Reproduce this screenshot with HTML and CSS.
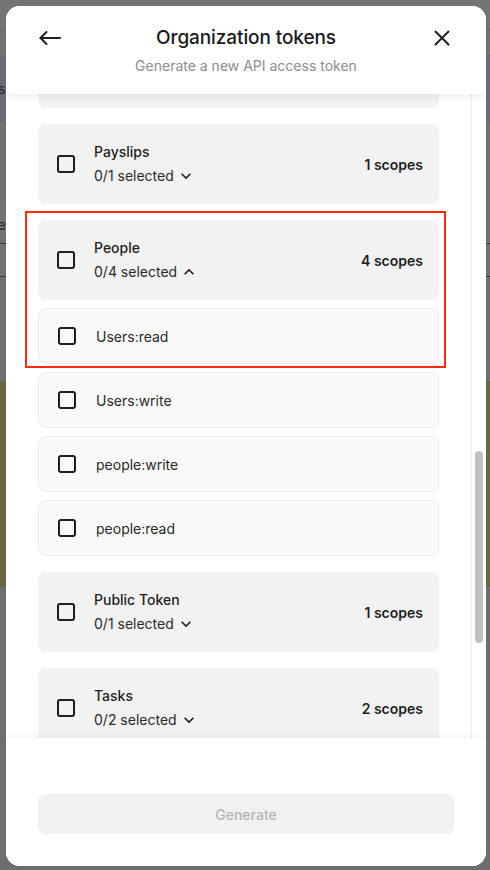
FILE: index.html
```html
<!DOCTYPE html>
<html lang="en">
<head>
<meta charset="utf-8">
<title>Organization tokens</title>
<link rel="stylesheet" href="styles.css">
</head>
<body>
<div class="backdrop">
  <div class="bg-top"></div>
  <div class="bg-line"></div>
  <div class="bg-bar"></div>
  <div class="bg-purple"><span class="bg-text">rs</span></div>
  <div class="bg-grey"></div>
  <div class="bg-row"><span class="bg-text">te</span></div>
  <div class="bg-rule"></div>
  <div class="bg-row2"></div>
  <div class="bg-rule"></div>
  <div class="bg-grey2"></div>
  <div class="bg-olive"></div>
</div>

<div class="modal">
  <header class="modal-head">
    <div class="head-row">
      <button class="icon-btn" aria-label="Back">
        <svg width="24" height="24" viewBox="0 0 24 24" fill="none" stroke="#1f1f1f" stroke-width="2" stroke-linecap="round" stroke-linejoin="round"><path d="M22 12H2.5"/><path d="M8.5 6l-6 6 6 6"/></svg>
      </button>
      <h1 class="title">Organization tokens</h1>
      <button class="icon-btn" aria-label="Close">
        <svg width="24" height="24" viewBox="0 0 24 24" fill="none" stroke="#1f1f1f" stroke-width="2" stroke-linecap="round"><path d="M5.5 5.5l13 13"/><path d="M18.5 5.5l-13 13"/></svg>
      </button>
    </div>
    <p class="subtitle">Generate a new API access token</p>
  </header>

  <div class="scroll">
    <div class="scroll-content">
      <div class="list">
        <div class="card card-blank"></div>

        <div class="card">
          <span class="cb"></span>
          <div class="card-text">
            <div class="card-title">Payslips</div>
            <div class="card-meta">0/1 selected
              <svg class="chev" width="20" height="20" viewBox="0 0 24 24"><path d="M16.59 8.59L12 13.17 7.41 8.59 6 10l6 6 6-6z" fill="#1f1f1f"/></svg>
            </div>
          </div>
          <span class="scopes">1 scopes</span>
        </div>

        <div class="group">
          <div class="highlight"></div>
          <div class="card">
            <span class="cb"></span>
            <div class="card-text">
              <div class="card-title">People</div>
              <div class="card-meta">0/4 selected
                <svg class="chev" width="20" height="20" viewBox="0 0 24 24"><path d="M7.41 15.41L12 10.83l4.59 4.58L18 14l-6-6-6 6z" fill="#1f1f1f"/></svg>
              </div>
            </div>
            <span class="scopes">4 scopes</span>
          </div>
          <div class="sub"><span class="cb"></span><span class="sub-label">Users:read</span></div>
          <div class="sub"><span class="cb"></span><span class="sub-label">Users:write</span></div>
          <div class="sub"><span class="cb"></span><span class="sub-label">people:write</span></div>
          <div class="sub"><span class="cb"></span><span class="sub-label">people:read</span></div>
        </div>

        <div class="card">
          <span class="cb"></span>
          <div class="card-text">
            <div class="card-title">Public Token</div>
            <div class="card-meta">0/1 selected
              <svg class="chev" width="20" height="20" viewBox="0 0 24 24"><path d="M16.59 8.59L12 13.17 7.41 8.59 6 10l6 6 6-6z" fill="#1f1f1f"/></svg>
            </div>
          </div>
          <span class="scopes">1 scopes</span>
        </div>

        <div class="card">
          <span class="cb"></span>
          <div class="card-text">
            <div class="card-title">Tasks</div>
            <div class="card-meta">0/2 selected
              <svg class="chev" width="20" height="20" viewBox="0 0 24 24"><path d="M16.59 8.59L12 13.17 7.41 8.59 6 10l6 6 6-6z" fill="#1f1f1f"/></svg>
            </div>
          </div>
          <span class="scopes">2 scopes</span>
        </div>
      </div>
    </div>
    <div class="scrollbar"><div class="thumb"></div></div>
  </div>

  <footer class="modal-foot">
    <button class="generate" disabled>Generate</button>
  </footer>
</div>
</body>
</html>
```

FILE: styles.css
```css
* { box-sizing: border-box; }

html, body {
  margin: 0;
  height: 100%;
}

body {
  background: #6e6e6e;
  font-family: Inter, "Noto Sans", "Liberation Sans", sans-serif;
  color: #1f1f1f;
  overflow: hidden;
}

/* dimmed page behind the dialog */
.backdrop {
  display: flex;
  flex-direction: column;
  width: 100%;
}
.bg-top { height: 29px; background: #767473; }
.bg-line { height: 1px; background: #6a6a6a; }
.bg-bar { height: 25px; background: #737271; }
.bg-purple {
  height: 67px;
  background: #6c697b;
  display: flex;
  align-items: center;
}
.bg-text {
  font-size: 14px;
  color: #2a2a2a;
  margin-left: -7px;
}
.bg-grey { height: 84px; background: #717171; }
.bg-row {
  height: 37px;
  background: #727272;
  display: flex;
  align-items: center;
}
.bg-rule { height: 1px; background: #3a3a3a; }
.bg-row2 { height: 32px; background: #727272; }
.bg-grey2 { height: 104px; background: #6f6f6f; }
.bg-olive { height: 206px; background: #6b6447; }

/* dialog */
.modal {
  position: fixed;
  left: 6px;
  top: 6px;
  width: 480px;
  height: 860px;
  background: #ffffff;
  border-radius: 14px;
  overflow: hidden;
  display: flex;
  flex-direction: column;
}

.modal-head {
  position: relative;
  z-index: 2;
  background: #fff;
  padding: 20px 32px 18px;
  box-shadow: 0 3px 8px rgba(0, 0, 0, 0.07);
  flex: none;
}
.head-row {
  display: flex;
  align-items: center;
  height: 24px;
}
.icon-btn {
  width: 24px;
  height: 24px;
  padding: 0;
  border: 0;
  background: none;
  display: flex;
  align-items: center;
  justify-content: center;
  flex: none;
}
.title {
  flex: 1;
  margin: 0;
  text-align: center;
  font-size: 19px;
  line-height: 24px;
  font-weight: 500;
  color: #1a1a1a;
  letter-spacing: -0.1px;
}
.subtitle {
  margin: 6px 0 0;
  text-align: center;
  font-size: 14px;
  line-height: 20px;
  color: #8d8d8d;
}

.scroll {
  flex: 1;
  min-height: 0;
  display: flex;
}
.scroll-content {
  flex: 1;
  overflow: hidden;
  padding: 0 32px;
}
.list {
  display: flex;
  flex-direction: column;
  gap: 16px;
  margin-top: -66px;
}
.group {
  position: relative;
  display: flex;
  flex-direction: column;
  gap: 8px;
}
.highlight {
  position: absolute;
  left: -13px;
  top: -9px;
  width: 421px;
  height: 157px;
  border: 2px solid #ff2a0a;
  pointer-events: none;
  z-index: 1;
}

.card {
  height: 80px;
  flex: none;
  background: #f2f2f2;
  border-radius: 8px;
  padding: 0 16px;
  display: flex;
  align-items: center;
  gap: 16px;
}
.cb {
  width: 18px;
  height: 18px;
  margin: 3px;
  border: 2px solid #1f1f1f;
  border-radius: 3px;
  flex: none;
}
.card-text {
  flex: 1;
  display: flex;
  flex-direction: column;
}
.card-title {
  font-size: 14px;
  line-height: 24px;
  font-weight: 500;
  color: #1f1f1f;
}
.card-meta {
  font-size: 14px;
  line-height: 24px;
  color: #2a2a2a;
  display: flex;
  align-items: center;
  gap: 2px;
}
.chev { flex: none; }
.scopes {
  font-size: 14px;
  font-weight: 600;
  color: #1f1f1f;
}

.sub {
  height: 56px;
  flex: none;
  background: #fafafa;
  border: 1px solid #ebebeb;
  border-radius: 8px;
  padding: 0 16px;
  display: flex;
  align-items: center;
  gap: 17px;
}
.sub-label {
  font-size: 14px;
  color: #2a2a2a;
}

.scrollbar {
  width: 15px;
  flex: none;
  border-left: 1px solid #ececec;
  padding: 357px 0 0 3px;
  background: #fff;
}
.thumb {
  width: 8px;
  height: 192px;
  border-radius: 4px;
  background: #c1c1c1;
}

.modal-foot {
  position: relative;
  z-index: 2;
  flex: none;
  height: 128px;
  padding: 56px 32px 32px;
  background: #fff;
  box-shadow: 0 -2px 6px rgba(0, 0, 0, 0.05);
}
.generate {
  width: 100%;
  height: 40px;
  border: 0;
  border-radius: 8px;
  background: #f1f1f1;
  color: #b6b6b6;
  font-family: Inter, "Noto Sans", "Liberation Sans", sans-serif;
  font-size: 14px;
  font-weight: 500;
}
```
